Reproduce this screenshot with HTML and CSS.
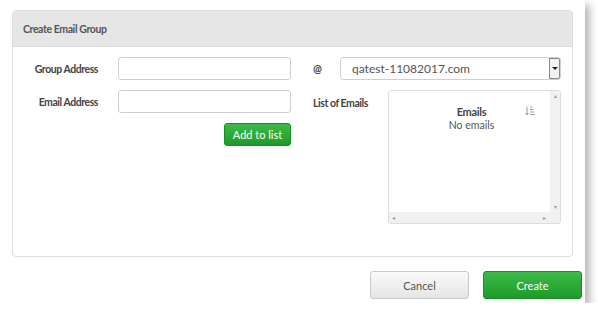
FILE: index.html
```html
<!DOCTYPE html>
<html lang="en">
<head>
  <meta charset="UTF-8">
  <title>Create Email Group</title>
  <link rel="stylesheet" href="styles.css">
</head>
<body>

  <div class="dialog">
    <!-- Form panel -->
    <div class="panel">
      <div class="panel-header">Create Email Group</div>
      <div class="panel-body">
        <div class="left-col">
          <div class="row">
            <label class="label">Group Address</label>
            <input type="text" class="field">
          </div>
          <div class="row">
            <label class="label">Email Address</label>
            <input type="text" class="field">
          </div>
          <div class="add-row">
            <button class="btn-green btn-small">Add to list</button>
          </div>
        </div>

        <div class="right-col">
          <div class="row">
            <span class="at">@</span>
            <div class="select">
              <span class="select-text">qatest-11082017.com</span>
              <span class="select-arrow"></span>
            </div>
          </div>
          <div class="row row-top">
            <span class="list-label">List of Emails</span>
            <div class="list-box">
              <div class="list-content">
                <div class="list-head">
                  <span class="list-title">Emails</span>
                  <svg class="sort-icon" width="10" height="10" viewBox="0 0 10 10">
                    <path d="M2 0.5 V8.5 M0.5 7 L2 9 L3.5 7" stroke="#9a9a9a" stroke-width="1" fill="none"/>
                    <path d="M5 1 H7 M5 3.5 H8 M5 6 H9 M5 8.5 H10" stroke="#9a9a9a" stroke-width="1"/>
                  </svg>
                </div>
                <div class="list-empty">No emails</div>
              </div>
              <div class="vscroll">
                <span class="arr">&#9652;</span>
                <span class="arr">&#9662;</span>
              </div>
              <div class="hscroll">
                <span class="arr">&#9666;</span>
                <span class="arr">&#9656;</span>
              </div>
            </div>
          </div>
        </div>
      </div>
    </div>

    <!-- Footer buttons -->
    <div class="footer">
      <button class="btn-grey btn-large">Cancel</button>
      <button class="btn-green btn-large">Create</button>
    </div>
  </div>

</body>
</html>
```

FILE: styles.css
```css
* {
  margin: 0;
  padding: 0;
  box-sizing: border-box;
}

body {
  font-family: Lato, 'Liberation Sans', sans-serif;
  background-color: #fff;
  color: #444;
  font-size: 11px;
}

.dialog {
  width: 585px;
  height: 303px;
  padding: 10px 3px 0 12px;
  background-color: #fff;
  box-shadow: 5px 5px 8px rgba(0, 0, 0, 0.28);
}

.panel {
  width: 561px;
  height: 247px;
  border: 1px solid #dedede;
  border-radius: 4px;
  overflow: hidden;
}

.panel-header {
  height: 36px;
  line-height: 36px;
  padding-left: 10px;
  background-color: #e6e6e6;
  border-bottom: 1px solid #dcdcdc;
  font-weight: bold;
  font-size: 10.5px;
  letter-spacing: -0.4px;
  color: #555;
}

.panel-body {
  display: flex;
  gap: 22px;
  padding-top: 10px;
}

.left-col,
.right-col {
  display: flex;
  flex-direction: column;
  gap: 10px;
}

.row {
  display: flex;
  align-items: center;
}

.row-top {
  align-items: flex-start;
}

.label,
.at,
.list-label,
.list-title {
  font-weight: bold;
  font-size: 10.5px;
  letter-spacing: -0.45px;
  color: #444;
}

.label {
  width: 85px;
  text-align: right;
  margin-right: 20px;
}

.field {
  width: 173px;
  height: 23px;
  border: 1px solid #cfcfcf;
  border-radius: 3px;
  background-color: #fff;
}

.add-row {
  display: flex;
  justify-content: flex-end;
}

.at {
  width: 27px;
}

.select {
  width: 221px;
  height: 23px;
  border: 1px solid #cfcfcf;
  border-radius: 3px;
  display: flex;
  align-items: center;
  justify-content: space-between;
  padding-left: 11px;
  font-size: 12px;
  color: #555;
}

.select-arrow {
  width: 11px;
  height: 21px;
  border-radius: 0 2px 2px 0;
  box-shadow: inset 0 0 0 1px #888;
  background: #f2f2f2;
  position: relative;
}

.select-arrow::after {
  content: "";
  position: absolute;
  left: 3px;
  top: 9px;
  border-left: 3px solid transparent;
  border-right: 3px solid transparent;
  border-top: 3px solid #222;
}

.list-label {
  width: 75px;
  padding-top: 7px;
}

.list-box {
  width: 173px;
  height: 134px;
  border: 1px solid #dcdcdc;
  border-radius: 3px;
  display: grid;
  grid-template-columns: 1fr 10px;
  grid-template-rows: 1fr 11px;
  overflow: hidden;
}

.list-content {
  padding-top: 14px;
}

.list-head {
  display: flex;
  justify-content: center;
  position: relative;
  padding-left: 4px;
}

.list-title {
  font-size: 11px;
  letter-spacing: -0.3px;
}

.sort-icon {
  position: absolute;
  right: 15px;
  top: 1px;
}

.list-empty {
  text-align: center;
  color: #555;
  padding-left: 4px;
  margin-top: 1px;
  font-size: 10.5px;
}

.vscroll {
  background-color: #f1f1f1;
  display: flex;
  flex-direction: column;
  justify-content: space-between;
  align-items: center;
  padding: 1px 0;
}

.hscroll {
  grid-column: 1 / 3;
  background-color: #f1f1f1;
  display: flex;
  justify-content: space-between;
  align-items: center;
  padding: 0 14px 0 3px;
}

.arr {
  font-size: 6px;
  color: #999;
  line-height: 8px;
}

.footer {
  display: flex;
  justify-content: flex-end;
  gap: 14px;
  margin-top: 14px;
}

button {
  font-family: Lato, 'Liberation Sans', sans-serif;
  border-radius: 3px;
  cursor: pointer;
}

.btn-green {
  background: linear-gradient(#3dbb48, #1d9a28);
  border: 1px solid #1c8c26;
  color: #fff;
}

.btn-grey {
  background: linear-gradient(#fafafa, #e5e5e5);
  border: 1px solid #c9c9c9;
  color: #555;
}

.btn-small {
  width: 67px;
  height: 23px;
  font-size: 11px;
}

.btn-large {
  width: 99px;
  height: 28px;
  font-size: 11px;
}
```
